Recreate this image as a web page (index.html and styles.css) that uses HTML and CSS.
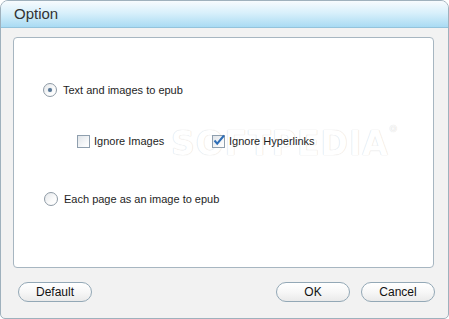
FILE: index.html
```html
<!DOCTYPE html>
<html lang="en">
<head>
    <meta charset="UTF-8">
    <title>Option</title>
    <link rel="stylesheet" href="styles.css">
</head>
<body>
    <div class="window">
        <div class="titlebar">Option</div>

        <div class="panel">
            <div class="watermark">SOFTPEDIA<sup>®</sup></div>

            <!-- mode 1 -->
            <div class="row mode-first">
                <span class="radio checked"></span>
                <span class="label">Text and images to epub</span>
            </div>

            <!-- sub options -->
            <div class="row subs">
                <div class="check-item first">
                    <span class="check"></span>
                    <span class="label">Ignore Images</span>
                </div>
                <div class="check-item">
                    <span class="check checked">
                        <svg width="13" height="13" viewBox="0 0 13 13">
                            <path d="M2.5 6.5 L5.2 9.6 L12 1.5" fill="none" stroke="#2f6fb8" stroke-width="2"/>
                        </svg>
                    </span>
                    <span class="label">Ignore Hyperlinks</span>
                </div>
            </div>

            <!-- mode 2 -->
            <div class="row mode-second">
                <span class="radio"></span>
                <span class="label">Each page as an image to epub</span>
            </div>
        </div>

        <div class="buttons">
            <button class="btn">Default</button>
            <div class="right">
                <button class="btn">OK</button>
                <button class="btn">Cancel</button>
            </div>
        </div>
    </div>
</body>
</html>
```

FILE: styles.css
```css
* {
    margin: 0;
    padding: 0;
    box-sizing: border-box;
}

body {
    font-family: "Liberation Sans", Arial, sans-serif;
    font-size: 11px;
    color: #1e1e1e;
    background: #fff;
}

.window {
    width: 449px;
    height: 319px;
    border: 1px solid #9fb1bd;
    border-radius: 8px 8px 5px 5px;
    background: #f2f2f2;
    overflow: hidden;
}

.titlebar {
    height: 27px;
    padding: 4px 0 0 13px;
    font-size: 15px;
    color: #333;
    background: linear-gradient(to bottom, #f7fbfe 0%, #d9f0fb 45%, #a9dbf3 100%);
    border-bottom: 1px solid #93c3dc;
}

.panel {
    position: relative;
    height: 231px;
    margin: 9px 14px 0 12px;
    padding: 44px 0 0 29px;
    background: #fff;
    border: 1px solid #a7b6c1;
    border-radius: 4px;
}

.row {
    position: relative;
    display: flex;
    align-items: center;
    height: 16px;
}

.subs {
    margin-top: 35px;
    padding-left: 34px;
}

.mode-second {
    margin-top: 42px;
    padding-left: 1px;
}

.check-item {
    display: flex;
    align-items: center;
}

.check-item.first {
    width: 135px;
}

.radio {
    width: 14px;
    height: 14px;
    border: 1px solid #8e9aa5;
    border-radius: 50%;
    background: linear-gradient(135deg, #e4e7ea 0%, #fbfbfb 60%, #ffffff 100%);
    display: flex;
    align-items: center;
    justify-content: center;
    margin-right: 6px;
}

.radio.checked::after {
    content: "";
    width: 4px;
    height: 4px;
    border-radius: 50%;
    background: #587795;
    box-shadow: 0 0 1px #9eb4c9;
}

.check {
    width: 13px;
    height: 13px;
    border: 1px solid #8f9fae;
    background: linear-gradient(135deg, #e1e5e9 0%, #f8f9fa 70%, #ffffff 100%);
    margin-right: 4px;
    position: relative;
}

.check svg {
    position: absolute;
    left: -1px;
    top: -2px;
}

.watermark {
    position: absolute;
    left: 157px;
    top: 86px;
    font-family: "DejaVu Sans", sans-serif;
    font-size: 33px;
    font-weight: bold;
    letter-spacing: 1px;
    color: #ffffff;
    text-shadow: 0 0 1px #dcdcdc, 0 0 1px #dcdcdc;
    pointer-events: none;
}

.watermark sup {
    font-size: 9px;
    vertical-align: top;
}

.buttons {
    display: flex;
    justify-content: space-between;
    padding: 14px 13px 0 17px;
}

.right {
    display: flex;
    gap: 11px;
}

.btn {
    width: 74px;
    height: 20px;
    font-family: "Liberation Sans", Arial, sans-serif;
    font-size: 12px;
    color: #111;
    border: 1px solid #93a8b6;
    border-radius: 10px;
    background: linear-gradient(to bottom, #ffffff 0%, #f7f7f7 50%, #eaeaea 100%);
}
```
